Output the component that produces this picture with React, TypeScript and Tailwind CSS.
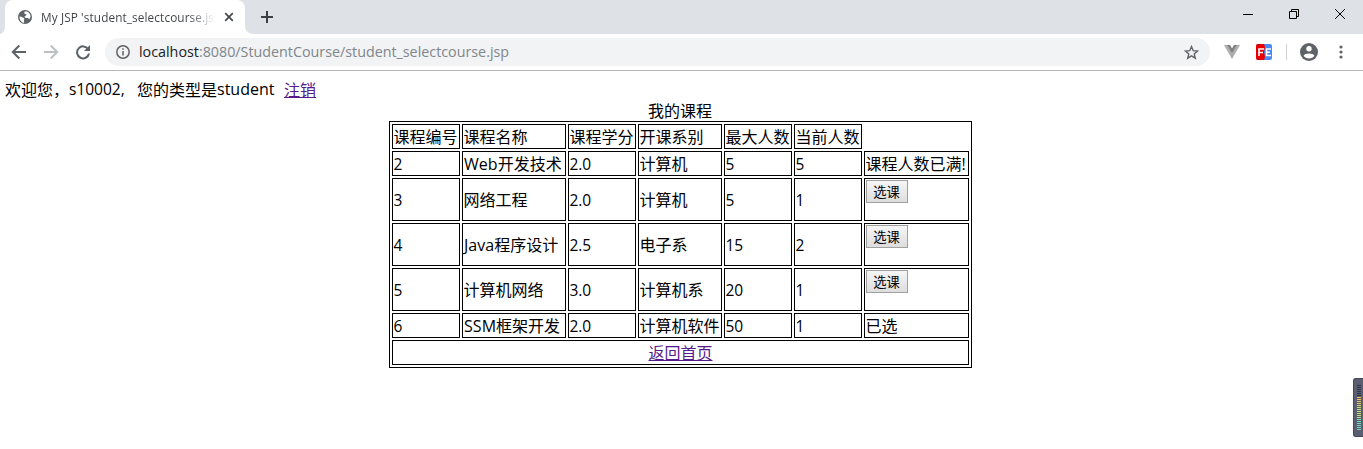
import React from "react";

const letters = "font-['Open_Sans','Noto_Sans_CJK_SC',sans-serif] text-[16px] leading-none tracking-[0.05px]";
const digits = "font-['Open_Sans','Noto_Sans_CJK_SC',sans-serif] text-[15.5px] leading-none tracking-[-0.1px]";

function Mixed({ text }: { text: string }) {
  const parts = text.match(/[\x20-\x7e]+|[^\x20-\x7e]+/g) ?? [];
  return (
    <>
      {parts.map((p, i) =>
        /^[\x20-\x7e]/.test(p) ? (
          <span key={i} className={/^\d/.test(p) ? digits : letters}>{p}</span>
        ) : (
          <span key={i}>{p}</span>
        ),
      )}
    </>
  );
}

const headers = ["课程编号", "课程名称", "课程学分", "开课系别", "最大人数", "当前人数"];

const rows: { cells: string[]; status?: string }[] = [
  { cells: ["2", "Web开发技术", "2.0", "计算机", "5", "5"], status: "课程人数已满!" },
  { cells: ["3", "网络工程", "2.0", "计算机", "5", "1"] },
  { cells: ["4", "Java程序设计", "2.5", "电子系", "15", "2"] },
  { cells: ["5", "计算机网络", "3.0", "计算机系", "20", "1"] },
  { cells: ["6", "SSM框架开发", "2.0", "计算机软件", "50", "1"], status: "已选" },
];

const cell = "border border-black py-0 pr-0 whitespace-nowrap";
const pad = (text: string) => (/^\d/.test(text) ? "pl-[0.5px]" : /^[A-Z]/.test(text) ? "pl-px" : "pl-[0.5px]");

function TabStrip() {
  return (
    <div className="flex h-[34px] bg-[#dee1e6]">
      <svg className="h-[34px] w-[5px] shrink-0" viewBox="0 0 5 34">
        <path d="M5 26v8H0C3 34 5 30 5 26Z" fill="#fff" />
      </svg>
      <div className="flex h-[34px] w-[240px] shrink-0 items-center rounded-t-lg bg-white pl-3">
        <svg className="size-4 shrink-0" viewBox="0 0 16 16">
          <circle cx="8" cy="8" r="7" fill="#5f6368" />
          <path d="M2.6 7.2 6 8.6l1.5 1.2-.6 1.3.3 2.7C4.300 13.500 2.300 11 2.600 7.200ZM7.500 2.400 9.800 2.600c2.300.8 3.700 2.700 3.800 5.200l-1.400 2.500-1.500-1.200-2-.2-1.300-1.700 1.800-.8.2-1.200-2-.4Z" fill="#fff" />
        </svg>
        <div className="ml-2 h-[18px] w-[174px] overflow-hidden whitespace-nowrap bg-linear-to-r from-[#3c4043] from-85% to-transparent bg-clip-text font-['Open_Sans',sans-serif] text-[11.8px] leading-[18px] tracking-[0.1px] text-transparent">
          My JSP 'student_selectcourse.jsp'
        </div>
        <svg className="ml-[9px] size-[10px] shrink-0" viewBox="0 0 10 10">
          <path d="m1.200 1.200 7.600 7.600m0-7.600-7.600 7.600" stroke="#45494d" strokeWidth="1.700" />
        </svg>
      </div>
      <svg className="h-[34px] w-[8px] shrink-0" viewBox="0 0 8 34">
        <path d="M0 26v8h8C3 34 0 30 0 26Z" fill="#fff" />
      </svg>
      <svg className="ml-[8px] mt-[11px] size-3" viewBox="0 0 12 12">
        <path d="M6 0v12M0 6h12" stroke="#3c4043" strokeWidth="2" />
      </svg>
      <svg className="ml-auto mr-[17px] mt-[8px] h-3 w-[104px]" viewBox="0 0 104 12" fill="none" stroke="#000">
        <path d="M1 6.500h10M47.500 3.500h7v7h-7zM49.500 3.500v-2h7v7h-2M93 1l10 10m0-10L93 11" />
      </svg>
    </div>
  );
}

function Toolbar() {
  return (
    <div className="flex h-[37px] items-center border-b border-[#b6b6b6] bg-white">
      <svg className="ml-[11px] size-4 shrink-0" viewBox="0 0 16 16" fill="none" stroke="#5f6368" strokeWidth="2">
        <path d="M15 8H2M8.300 1.500 1.800 8l6.500 6.500" />
      </svg>
      <svg className="ml-4 size-4 shrink-0" viewBox="0 0 16 16" fill="none" stroke="#bdc0c3" strokeWidth="2">
        <path d="M1 8h13M7.700 1.500 14.200 8l-6.500 6.500" />
      </svg>
      <svg className="ml-4 size-4 shrink-0" viewBox="0 0 16 16">
        <path d="M13.200 5.200A6 6 0 1 0 14 9.500" fill="none" stroke="#5f6368" strokeWidth="2" />
        <path d="M15 1v6H9Z" fill="#5f6368" />
      </svg>
      <div className="ml-[14px] flex h-7 w-[1105px] items-center rounded-full bg-[#f1f3f4] pl-[11px]">
        <svg className="size-[14px]" viewBox="0 0 14 14" fill="none" stroke="#5f6368" strokeWidth="1.500">
          <circle cx="7" cy="7" r="6.200" />
          <path d="M7 6v4.500M7 3.300v1.500" />
        </svg>
        <span className="ml-[9px] whitespace-nowrap font-['Open_Sans',sans-serif] text-[14.3px] leading-7 text-[#80868b]">
          <span className="text-[#202124]">localhost</span>:8080/StudentCourse/student_selectcourse.jsp
        </span>
        <svg className="ml-auto mr-[11px] size-[15px]" viewBox="0 0 15 15">
          <path d="m7.500 1.600 1.700 4.100 4.400.3-3.400 2.900 1.100 4.300-3.800-2.300-3.800 2.300 1.100-4.300L1.400 6l4.400-.3Z" fill="none" stroke="#5f6368" strokeWidth="1.400" />
        </svg>
      </div>
      <svg className="ml-[14px] h-[14px] w-4" viewBox="0 0 16 14">
        <path d="M0 0h3l5 8.500L13 0h3L8 14Z" fill="#aeaeae" />
        <path d="M3 0h3l2 3.500L10 0h3L8 8.500Z" fill="#7f7f7f" />
      </svg>
      <svg className="ml-4 size-4" viewBox="0 0 16 16">
        <rect width="16" height="16" rx="2" fill="#4a8af4" />
        <path d="M2 0h6l1 3-1 5 1 5-1 3H2q-2 0-2-2V2q0-2 2-2Z" fill="#e80000" />
        <path d="M3 12V5h5M3 8.500h4M15 5h-4.500v6.500H15M10.500 8.300H14" fill="none" stroke="#fff" strokeWidth="1.600" />
      </svg>
      <div className="ml-[14px] h-4 w-px bg-[#cfd1d4]" />
      <svg className="ml-[13px] size-[18px]" viewBox="0 0 18 18">
        <circle cx="9" cy="9" r="9" fill="#5f6368" />
        <circle cx="9" cy="5.800" r="2.700" fill="#fff" />
        <path d="M3.600 12.800C4.800 9.800 13.200 9.800 14.400 12.800 12 16.300 6 16.300 3.600 12.800Z" fill="#fff" />
      </svg>
      <svg className="ml-[21px] h-[14px] w-1" viewBox="0 0 4 14" fill="#5f6368">
        <circle cx="2" cy="2" r="1.600" />
        <circle cx="2" cy="7" r="1.600" />
        <circle cx="2" cy="12" r="1.600" />
      </svg>
    </div>
  );
}

function CourseTable() {
  return (
    <table className="mx-auto w-[583px] table-fixed border-separate border-spacing-[2px] border border-black leading-[21px]">
      <caption className="h-[21px] pr-px leading-[20px]">我的课程</caption>
      <colgroup>
        <col className="w-[68px]" />
        <col className="w-[104px]" />
        <col className="w-[68px]" />
        <col className="w-[84px]" />
        <col className="w-[68px]" />
        <col className="w-[68px]" />
        <col className="w-[105px]" />
      </colgroup>
      <tbody>
        <tr className="h-[25px]">
          {headers.map((h) => (
            <td key={h} className={`${cell} ${pad(h)}`}>{h}</td>
          ))}
        </tr>
        {rows.map((r) => (
          <tr key={r.cells[0]} className={r.status ? "h-[25px]" : "h-[43px]"}>
            {r.cells.map((c, i) => (
              <td key={i} className={`${cell} ${pad(c)}`}><Mixed text={c} /></td>
            ))}
            {r.status ? (
              <td className={`${cell} ${pad(r.status)}`}><Mixed text={r.status} /></td>
            ) : (
              <td className="border border-black p-px align-top">
                <button className="block h-[23px] w-[42px] border border-[#a0a0a0] bg-linear-to-b from-[#f6f6f6] to-[#dddddd] pr-px text-[13.3px] leading-[20px]">
                  选课
                </button>
              </td>
            )}
          </tr>
        ))}
        <tr className="h-[25px]">
          <td colSpan={7} className={`${cell} text-center`}>
            <a href="#" className="text-[#551a8b] underline">返回首页</a>
          </td>
        </tr>
      </tbody>
    </table>
  );
}

export default function App() {
  return (
    <div className="relative h-[449px] w-[1363px] overflow-hidden bg-white font-['Noto_Sans_CJK_SC',sans-serif] text-[16px] font-normal text-black">
      <TabStrip />
      <Toolbar />
      <div className="pt-[8px] pr-[7px] pl-[5px]">
        <div className="flex h-[21px] whitespace-pre leading-[21px]">
          <span className="w-[64px]">欢迎您，</span>
          <span className="w-[68px] font-['Open_Sans',sans-serif] text-[15.5px]">s10002,</span>
          <span className="w-[80px]">您的类型是</span>
          <span className="w-[67px] font-['Open_Sans',sans-serif] text-[16px]">student</span>
          <a href="#" className="text-[#551a8b] underline">注销</a>
        </div>
        <CourseTable />
      </div>
      <div className="absolute top-[378px] right-0 flex h-[59px] w-[10px] flex-col items-center justify-center rounded-l-[3px] border border-r-0 border-[#44475a] bg-[#5a5e70]">
        <svg className="h-[46px] w-1" viewBox="0 0 4 46" shapeRendering="crispEdges">
          {Array.from({ length: 23 }, (_, i) => (
            <rect key={i} y={i * 2} width="4" height="1" fill={i < 6 ? "#303344" : i < 10 ? "#f0c35a" : i < 17 ? "#c4e070" : "#70dcc0"} />
          ))}
        </svg>
      </div>
    </div>
  );
}
